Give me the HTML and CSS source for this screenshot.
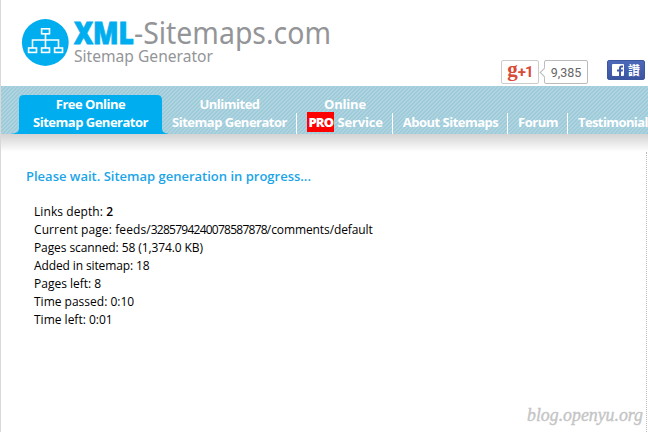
FILE: index.html
```html
<!DOCTYPE html>
<html lang="en">
<head>
<meta charset="utf-8">
<title>XML-Sitemaps.com</title>
<link rel="stylesheet" href="styles.css">
</head>
<body>
<div class="page">
  <header class="header">
    <svg class="logo" width="320" height="60" viewBox="0 0 320 60">
      <circle cx="24.3" cy="28.5" r="23.4" fill="#00aeef"/>
      <g fill="none" stroke="#fff" stroke-width="1.6">
        <rect x="20.6" y="14.8" width="7.9" height="5"/>
        <rect x="7.6" y="34" width="7.9" height="4.4"/>
        <rect x="20.6" y="34" width="7.9" height="4.4"/>
        <rect x="33.6" y="34" width="7.9" height="4.4"/>
        <path d="M24.5 20v14M11.5 34v-8h26v8"/>
      </g>
      <text class="logo-xml" x="53" y="30" textLength="60" lengthAdjust="spacingAndGlyphs">XML</text>
      <text class="logo-site" x="113" y="30" textLength="197" lengthAdjust="spacingAndGlyphs">-Sitemaps.com</text>
      <text class="logo-sub" x="53" y="48" textLength="139" lengthAdjust="spacingAndGlyphs">Sitemap Generator</text>
    </svg>
    <div class="social">
      <div class="plus"><span class="plus-g">g</span><span class="plus-one">+1</span></div>
      <div class="count">9,385</div>
      <div class="fb">
        <svg width="12" height="12" viewBox="0 0 12 12"><rect width="12" height="12" rx="1" fill="#fff"/><path d="M7 12V7.5H5V5.6h2V4.2C7 2.4 8 1.6 9.5 1.6H11v2h-1c-.7 0-1 .3-1 .9v1.1h2l-.3 1.9H9V12z" fill="#405aa5"/></svg>
        <span>讚</span>
      </div>
    </div>
  </header>
  <nav class="nav">
    <a class="item active"><svg class="tab" width="158" height="39" viewBox="0 0 158 39"><path d="M0 39c6-1 8-2 8-6V5q0-5 5-5h133q5 0 5 5v28c0 4 2 5 7 6z" fill="#00aeef"/></svg><span>Free Online</span><span>Sitemap Generator</span></a>
    <a class="item unlimited"><span>Unlimited</span><span>Sitemap Generator</span></a>
    <a class="item service"><span>Online</span><span><b class="pro">PRO</b> Service</span></a>
    <a class="item about"><span>About Sitemaps</span></a>
    <a class="item forum"><span>Forum</span></a>
    <a class="item testimonials"><span>Testimonials</span></a>
  </nav>
  <div class="shade"></div>
  <main class="main">
    <h1 class="title">Please wait. Sitemap generation in progress...</h1>
    <div class="stats">
      <div class="depth">Links depth: <b>2</b></div>
      <div class="current">Current page: feeds/<span class="id">3285794240078587878</span><span class="path">/comments/default</span></div>
      <div class="scanned">Pages scanned: 58 (1,374.0 KB)</div>
      <div class="added">Added in sitemap: 18</div>
      <div class="left">Pages left: 8</div>
      <div class="passed">Time passed: 0:10</div>
      <div class="remain">Time left: 0:01</div>
    </div>
    <svg class="mark" width="122" height="30" viewBox="0 0 122 30"><text x="3" y="19" textLength="116" lengthAdjust="spacingAndGlyphs">blog.openyu.org</text></svg>
  </main>
</div>
</body>
</html>
```
FILE: styles.css
```css
* { box-sizing: border-box; }
body { margin: 0; background: #fff; overflow: hidden; font-family: "Trebuchet MS", "Open Sans", sans-serif; }
.page { width: 648px; height: 432px; overflow: hidden; border-left: 1px solid #d9d9d9; display: flex; flex-direction: column; }
.header { height: 86px; flex: none; display: flex; justify-content: space-between; padding: 14px 3px 0 20px; }
.logo { flex: none; display: block; }
.logo-xml { font: 800 30px "Open Sans", sans-serif; fill: #00aeef; stroke: #00aeef; stroke-width: .9px; }
.logo-site { font: 400 30px "Noto Sans", sans-serif; fill: #939598; }
.logo-sub { font: 400 16.5px "Noto Sans", sans-serif; fill: #939598; }
.social { display: flex; padding-top: 46px; }
.plus { width: 38px; height: 24px; border: 1px solid #ccc; border-radius: 2px; color: #d94a38; display: flex; align-items: center; justify-content: center; }
.plus-g { font: 700 21px/20px "Liberation Serif", serif; margin-top: -6px; }
.plus-one { font: 700 15px/20px Roboto, sans-serif; letter-spacing: -1px; margin-top: -1px; }
.count { position: relative; width: 44px; height: 24px; margin-left: 5px; border: 1px solid #bbb; border-radius: 2px; font: 12.5px/24px Roboto, sans-serif; color: #666; text-align: center; }
.count::before { content: ""; position: absolute; left: -4px; top: 8px; width: 6px; height: 6px; background: #fff; border: 1px solid #bbb; border-width: 0 0 1px 1px; transform: rotate(45deg); }
.fb { width: 38px; height: 20px; margin-left: 19px; border: 1px solid #3c559f; border-radius: 2px; background: linear-gradient(#4c69ba, #3b55a0); display: flex; align-items: center; justify-content: center; gap: 4px; color: #fff; font: 700 12px/18px "Noto Sans CJK TC", sans-serif; }
.nav { height: 48px; flex: none; display: flex; align-items: flex-end; padding-left: 18px; background: repeating-linear-gradient(135deg, #9ccbdb 0 1.42px, #b1d3de 1.42px 2.83px); color: #fff; font-size: 13px; font-weight: 700; line-height: 18px; }
.item { position: relative; flex: none; height: 39px; padding-bottom: 3px; display: flex; flex-direction: column; justify-content: flex-end; align-items: center; white-space: nowrap; letter-spacing: -.5px; }
.item > span { position: relative; }
.item:not(.active)::after { content: ""; position: absolute; right: 0; bottom: 0; width: 1px; height: 21px; background: #fff; }
.tab { position: absolute; left: -8px; top: 0; }
.active { width: 143px; }
.unlimited { width: 135px; }
.service { width: 96px; letter-spacing: -.2px; }
.about { width: 115px; }
.forum { width: 60px; }
.testimonials { width: 110px; align-items: flex-start; padding-left: 10px; letter-spacing: -.6px; }
.pro { background: #f00; padding: 1px 1px; letter-spacing: -.8px; }
.shade { height: 18px; flex: none; background: linear-gradient(#d3d3d3, #fff); }
.main { position: relative; flex: 1; margin-right: 1px; padding: 14px 0 0 25px; border-right: 1px dotted #bbb; }
.title { margin: 0; font-size: 13px; line-height: 20px; font-weight: 600; color: #1ba5e8; white-space: nowrap; }
.stats { padding: 17px 0 0 8px; font-size: 12px; line-height: 18px; color: #000; white-space: nowrap; }
.depth { letter-spacing: .08px; }
.depth b { font-weight: 600; }
.current { letter-spacing: .1px; }
.id { letter-spacing: -.75px; }
.path { letter-spacing: -.1px; }
.scanned { letter-spacing: -.1px; }
.added { letter-spacing: -.12px; }
.mark { position: absolute; right: 0; bottom: 0; overflow: visible; }
.mark text { font: italic 400 19px "Monotype Corsiva", "Apple Chancery", "Liberation Serif", cursive; fill: #c5c5c5; stroke: #c5c5c5; stroke-width: .4px; }
```
